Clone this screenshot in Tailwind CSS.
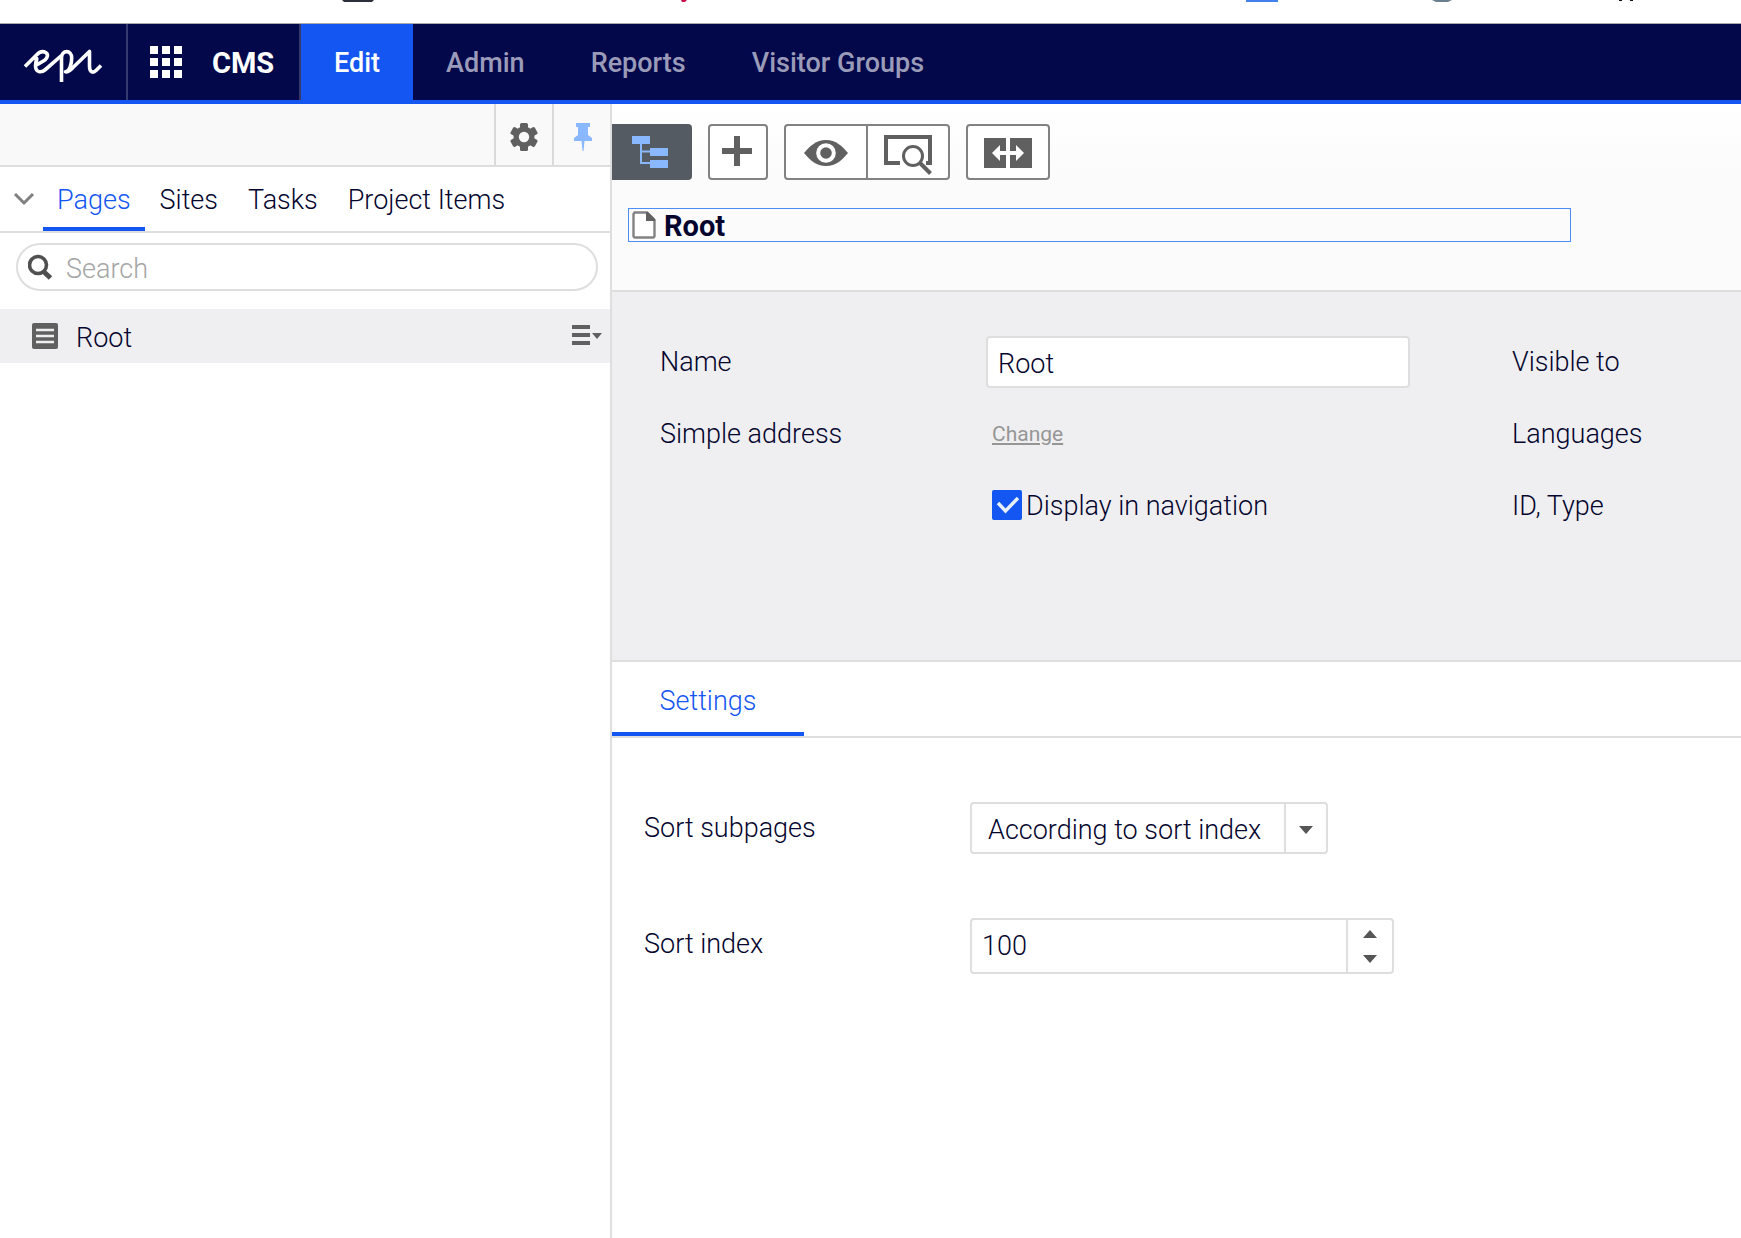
<!DOCTYPE html>
<html lang="en">
<head>
<meta charset="utf-8">
<title>CMS – Edit</title>
<script src="https://cdn.jsdelivr.net/npm/@tailwindcss/browser@4"></script>
</head>
<body class="min-h-screen flex flex-col bg-white overflow-x-hidden font-[Roboto,sans-serif] font-light text-[27px] leading-8 text-[#04052e]">

<!-- bottom edge of the bookmarks bar -->
<div class="h-6 border-b border-[#a9a9ad] overflow-hidden">
  <svg class="block" width="1741" height="4" viewBox="0 0 1741 4" aria-hidden="true">
    <path d="M342 0h32l-2 2h-28z" fill="#2b303b"/>
    <path d="M681 0h6l-2 2h-3z" fill="#c8104c"/>
    <path d="M1246 0h32v2h-32z" fill="#4280ef"/>
    <path d="M1432 0h20l-4 2h-12z" fill="#6c7f8e"/>
    <path d="M1619 0h3v1h-3zM1630 0h3v1h-3z" fill="#111"/>
  </svg>
</div>

<header class="flex h-20 bg-[#02084a] border-b-4 border-[#1456f1] text-[#9a9bb8] font-medium">
  <a href="#" aria-label="Epi" class="w-32 shrink-0 border-r-2 border-[#35396b]">
    <svg class="block" width="126" height="76" viewBox="0 24 126 76" fill="none" stroke="#fff" stroke-width="3.6" stroke-linejoin="round">
      <path d="M25 66.500L36.500 55C39.500 51.700 43 51 46 52.700C48.500 54.500 47.500 57.500 45 60L35.800 65.500L36.800 58.500C36 61 35.500 63 35.500 66C35.800 72.500 41 73.300 45.500 69.500L61.500 55.500"/>
      <path d="M61.500 82V58C61.500 49.500 71.700 49.500 71.700 58C71.700 64 69.500 71.500 65.500 71.800C69 72.500 72 69 74 66.500L89.500 51.500V66C89.500 73 93.500 73 96 70.500L101 65.500"/>
    </svg>
  </a>
  <a href="#" class="w-[173px] shrink-0 flex items-center pl-[22px] gap-[30px] border-r-2 border-[#35396b] text-white font-bold text-[29px]">
    <svg width="32" height="32" viewBox="0 0 32 32" fill="#fff" aria-hidden="true"><path d="M0 0h8v8H0zM12 0h8v8h-8zM24 0h8v8h-8zM0 12h8v8H0zM12 12h8v8h-8zM24 12h8v8h-8zM0 24h8v8H0zM12 24h8v8h-8zM24 24h8v8h-8z"/></svg>
    <span class="pt-0.5">CMS</span>
  </a>
  <nav class="flex items-stretch">
    <a href="#" class="flex items-center pt-0.5 px-[33px] bg-[#1456f1] text-white">Edit</a>
    <a href="#" class="flex items-center pt-0.5 px-[33px]">Admin</a>
    <a href="#" class="flex items-center pt-0.5 px-[33px]">Reports</a>
    <a href="#" class="flex items-center pt-0.5 px-[33px] whitespace-nowrap">Visitor Groups</a>
  </nav>
</header>

<div class="flex flex-1">
  <aside class="w-[612px] shrink-0 border-r-2 border-[#dedede]">
    <div class="flex justify-end h-[63px] bg-[#f9f9f9] border-b-2 border-[#dedede]">
      <button aria-label="Settings" class="w-[58px] pt-1 border-l-2 border-[#dadada] flex items-center justify-center">
        <svg width="30" height="30" viewBox="0 0 30 30"><g fill="#606060"><circle cx="15" cy="15" r="10.500"/><rect x="11" y="1" width="8" height="28" rx="1.500"/><rect x="11" y="1" width="8" height="28" rx="1.500" transform="rotate(60 15 15)"/><rect x="11" y="1" width="8" height="28" rx="1.500" transform="rotate(120 15 15)"/></g><circle cx="15" cy="15" r="5.200" fill="#f9f9f9"/></svg>
      </button>
      <button aria-label="Pin" class="w-[58px] pt-1 pl-0.5 border-l-2 border-[#dadada] flex items-center justify-center">
        <svg width="20" height="30" viewBox="0 0 20 30" fill="#8ab8ff"><path d="M3 1h14v4h-2v8l4 3v3h-7.500l-1 10h-1l-1-10H1v-3l4-3V5H3z"/></svg>
      </button>
    </div>
    <nav class="flex h-[66px] border-b-2 border-[#dedede]">
      <button aria-label="Collapse" class="w-[43px] pl-[5px] flex items-center justify-center">
        <svg width="22" height="14" viewBox="0 0 22 14" fill="none" stroke="#808080" stroke-width="3"><path d="M2 2l9 9 9-9"/></svg>
      </button>
      <a href="#" class="px-[14px] pt-[17px] border-b-4 border-[#1456f1] text-[#1456f1]">Pages</a>
      <a href="#" class="px-[15px] pt-[17px]">Sites</a>
      <a href="#" class="px-[15px] pt-[17px]">Tasks</a>
      <a href="#" class="px-[15px] pt-[17px] whitespace-nowrap">Project Items</a>
    </nav>
    <label class="mt-[10px] ml-4 mr-3 h-12 flex items-center gap-3 pl-[10px] pr-4 border-2 border-[#dedede] rounded-full">
      <svg class="shrink-0" width="26" height="28" viewBox="0 0 26 28" fill="none" stroke="#505050"><circle cx="10" cy="12" r="8.500" stroke-width="3.600"/><path d="M15.500 18.500l7 6.500" stroke-width="5"/></svg>
      <input type="text" aria-label="Search" placeholder="Search" class="w-full pt-1 outline-none placeholder:text-[#a5a5a5]">
    </label>
    <div class="mt-[18px] h-[54px] flex items-center bg-[#efeff1] pl-8 pr-2">
      <svg width="26" height="26" viewBox="0 0 26 26" aria-hidden="true"><rect width="26" height="26" rx="2" fill="#606060"/><path d="M4 7h18M4 13h18M4 19h18" stroke="#efeff1" stroke-width="2.400"/></svg>
      <a href="#" class="ml-[18px] pt-[3px] flex-1">Root</a>
      <button aria-label="Menu"><svg class="block" width="30" height="22" viewBox="0 0 30 22" fill="#606060"><path d="M0 0h18v4H0zM0 8h18v4H0zM0 16h18v4H0zM20 8h10l-5 6z"/></svg></button>
    </div>
  </aside>

  <main class="flex-1 min-w-0">
    <div class="h-[188px] pt-5 bg-linear-to-b from-white to-[#fbfbfb] to-40% border-b-2 border-[#dedede]">
      <div class="flex gap-4 h-14">
        <button aria-label="Navigation tree" class="w-20 pr-1 bg-[#545b63] rounded-r-sm flex items-center justify-center">
          <svg width="36" height="32" viewBox="0 0 36 32" fill="#8ab8ff"><path d="M0 0h18v8H0zM18 12h18v8H18zM18 24h18v8H18z"/><path d="M9 8v19h9M9 15.500h9" fill="none" stroke="#8ab8ff" stroke-width="2"/></svg>
        </button>
        <button aria-label="Add" class="w-[60px] pr-0.5 bg-white border-2 border-[#828282] rounded-sm flex justify-center pt-[10px]">
          <svg width="30" height="30" viewBox="0 0 30 30" stroke="#606060" stroke-width="6"><path d="M15 0v30M0 15h30"/></svg>
        </button>
        <div class="flex bg-white border-2 border-[#828282] rounded-sm">
          <button aria-label="Preview" class="w-[82px] pt-0.5 border-r-2 border-[#828282] flex items-center justify-center">
            <svg width="44" height="26" viewBox="0 0 44 26"><path d="M0 13C6 6 12 0 22 0s16 6 22 13c-6 7-12 13-22 13S6 20 0 13z" fill="#606060"/><circle cx="22" cy="13" r="7.800" fill="#606060" stroke="#fff" stroke-width="4"/></svg>
          </button>
          <button aria-label="View settings" class="w-20 pt-1.5 flex items-center justify-center">
            <svg width="48" height="40" viewBox="0 0 48 40" fill="none" stroke="#606060"><path d="M16 28H2V2h44v26h-4" stroke-width="4"/><circle cx="29" cy="21" r="9.500" fill="#fff" stroke="#fff" stroke-width="6"/><circle cx="29" cy="21" r="9.500" stroke-width="3"/><path d="M36 28l10.500 10.500" stroke-width="4"/></svg>
          </button>
        </div>
        <button aria-label="Compare" class="w-[84px] pt-0.5 bg-white border-2 border-[#828282] rounded-sm flex items-center justify-center">
          <svg width="48" height="30" viewBox="0 0 48 30"><path d="M0 0h22v30H0zM26 0h22v30H26z" fill="#606060"/><path d="M8 15l8-8v6h16V7l8 8-8 8v-6H16v6z" fill="#fff"/></svg>
        </button>
      </div>
      <div class="mt-7 ml-4 mr-[170px] h-[34px] pl-[3px] flex items-center gap-2 border border-[#4a8df6] bg-[#fbfbfb]">
        <svg width="24" height="28" viewBox="0 0 24 28" aria-hidden="true"><path d="M2.500 1.500H15L22.500 9v16a1.500 1.500 0 0 1-1.500 1.500H3A1.500 1.500 0 0 1 1.500 25V3z" fill="#fff" stroke="#828282" stroke-width="2.400"/><path d="M14 1h2l7 7v2h-9z" fill="#606060"/></svg>
        <h1 class="pt-0.5 font-bold text-[29px]">Root</h1>
      </div>
    </div>

    <section class="h-[370px] pt-[34px] pl-12 bg-[#efeff1] border-b-2 border-[#dedede] grid grid-cols-[326px_424px_1fr] auto-rows-[72px] content-start items-center overflow-hidden whitespace-nowrap">
      <label for="name">Name</label>
      <input id="name" type="text" value="Root" class="w-full h-[52px] pt-[3px] bg-white border-2 border-[#dedede] rounded-sm px-[10px] outline-none">
      <span class="pl-[102px]">Visible to</span>
      <span>Simple address</span>
      <a href="#" class="pl-[6px] text-[21px] font-normal text-[#969696] underline decoration-2 underline-offset-2">Change</a>
      <span class="pl-[102px]">Languages</span>
      <label class="col-start-2 flex items-start gap-1 pl-[6px]">
        <span class="grid size-[30px] shrink-0">
          <input type="checkbox" checked class="col-start-1 row-start-1 size-[30px] appearance-none bg-[#1456f1] rounded-[2px]">
          <svg class="col-start-1 row-start-1 pointer-events-none" width="30" height="30" viewBox="0 0 30 30" fill="none" stroke="#e8f0ff" stroke-width="3.400"><path d="M6 13l7.500 8L26 8"/></svg>
        </span>
        Display in navigation
      </label>
      <span class="pl-[102px]">ID, Type</span>
    </section>

    <nav class="flex h-[76px] border-b-2 border-[#dedede]">
      <a href="#" class="w-48 pt-2 flex items-center justify-center border-b-4 border-[#1456f1] text-[#1456f1]">Settings</a>
    </nav>

    <form class="pt-16 pl-8 grid grid-cols-[326px_1fr] gap-y-16">
      <label for="subpages" class="pt-[10px]">Sort subpages</label>
      <div class="w-[358px] h-[52px] flex border-2 border-[#dedede] rounded-sm relative">
        <select id="subpages" class="w-full appearance-none pt-[3px] pl-4 outline-none"><option>According to sort index</option></select>
        <span class="absolute inset-y-0 right-0 w-[42px] border-l-2 border-[#dedede] flex items-center justify-center pt-1 pointer-events-none">
          <svg width="14" height="8" viewBox="0 0 14 8" fill="#555"><path d="M0 0h14L7 8z"/></svg>
        </span>
      </div>
      <label for="index" class="pt-[10px]">Sort index</label>
      <div class="w-[424px] h-14 flex border-2 border-[#dedede] rounded-sm">
        <input id="index" type="text" value="100" class="flex-1 min-w-0 pl-[10px] outline-none">
        <span class="w-[46px] border-l-2 border-[#dedede] flex flex-col items-center justify-center gap-[17px]">
          <button type="button" aria-label="Increase"><svg class="block" width="14" height="8" viewBox="0 0 14 8" fill="#555"><path d="M0 8h14L7 0z"/></svg></button>
          <button type="button" aria-label="Decrease"><svg class="block" width="14" height="8" viewBox="0 0 14 8" fill="#555"><path d="M0 0h14L7 8z"/></svg></button>
        </span>
      </div>
    </form>
  </main>
</div>
</body>
</html>
